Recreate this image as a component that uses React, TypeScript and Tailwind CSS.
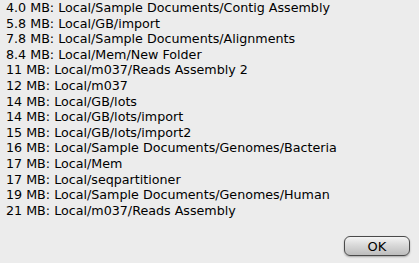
const rows = [
  "4.0 MB: Local/Sample Documents/Contig Assembly",
  "5.8 MB: Local/GB/import",
  "7.8 MB: Local/Sample Documents/Alignments",
  "8.4 MB: Local/Mem/New Folder",
  "11 MB: Local/m037/Reads Assembly 2",
  "12 MB: Local/m037",
  "14 MB: Local/GB/lots",
  "14 MB: Local/GB/lots/import",
  "15 MB: Local/GB/lots/import2",
  "16 MB: Local/Sample Documents/Genomes/Bacteria",
  "17 MB: Local/Mem",
  "17 MB: Local/seqpartitioner",
  "19 MB: Local/Sample Documents/Genomes/Human",
  "21 MB: Local/m037/Reads Assembly",
];

export default function App() {
  return (
    <div className="flex h-[263px] w-[419px] flex-col bg-[#ececec] font-['Lucida_Grande','DejaVu_Sans',sans-serif] text-[12.7px] text-black">
      <div className="pl-[6px] leading-[15.6px]">
        {rows.map((r, i) => (
          <div key={i} className="whitespace-pre">{r}</div>
        ))}
      </div>
      <div className="mt-auto flex justify-end pb-[7px] pr-[9px]">
        <button className="h-[20px] w-[66px] rounded-[6px] border border-[#4a4a4a] bg-gradient-to-b from-[#f4f4f4] via-[#d6d6d6] to-[#bdbdbd] text-[13px] leading-none shadow-[0_1px_2px_rgba(0,0,0,0.3)]">
          OK
        </button>
      </div>
    </div>
  );
}
